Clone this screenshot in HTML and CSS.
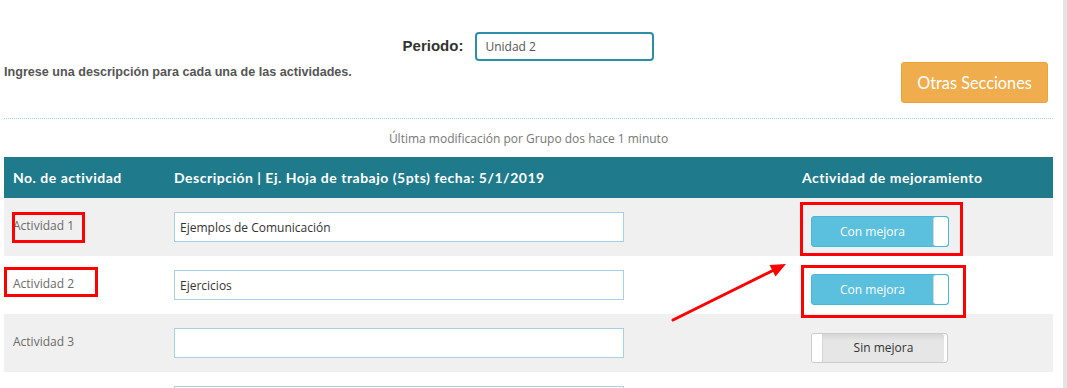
FILE: index.html
```html
<!DOCTYPE html>
<html lang="es">
<head>
    <meta charset="UTF-8">
    <meta name="viewport" content="width=device-width, initial-scale=1.0">
    <title>Actividades</title>
    <link rel="stylesheet" href="styles.css">
</head>
<body>
    <div class="page">
        <div class="periodo">
            <label class="periodo-label" for="periodo">Periodo:</label>
            <input class="periodo-input" id="periodo" type="text" value="Unidad 2">
        </div>

        <div class="intro">
            <p class="intro-text">Ingrese una descripción para cada una de las actividades.</p>
            <button class="btn-secciones">Otras Secciones</button>
        </div>

        <hr class="divider">

        <div class="last-mod">Última modificación por Grupo dos hace 1 minuto</div>

        <table class="activities">
            <colgroup>
                <col class="col-no">
                <col class="col-desc">
                <col class="col-mejora">
            </colgroup>
            <thead>
                <tr>
                    <th>No. de actividad</th>
                    <th>Descripción | Ej. Hoja de trabajo (5pts) fecha: 5/1/2019</th>
                    <th>Actividad de mejoramiento</th>
                </tr>
            </thead>
            <tbody>
                <tr>
                    <td><span class="act-name">Actividad 1</span></td>
                    <td><input class="desc-input" type="text" value="Ejemplos de Comunicación"></td>
                    <td>
                        <div class="toggle toggle-on">
                            <span class="toggle-label">Con mejora</span>
                            <span class="toggle-handle"></span>
                        </div>
                    </td>
                </tr>
                <tr>
                    <td><span class="act-name">Actividad 2</span></td>
                    <td><input class="desc-input" type="text" value="Ejercicios"></td>
                    <td>
                        <div class="toggle toggle-on">
                            <span class="toggle-label">Con mejora</span>
                            <span class="toggle-handle"></span>
                        </div>
                    </td>
                </tr>
                <tr>
                    <td><span class="act-name">Actividad 3</span></td>
                    <td><input class="desc-input" type="text" value=""></td>
                    <td>
                        <div class="toggle toggle-off">
                            <span class="toggle-handle"></span>
                            <span class="toggle-label">Sin mejora</span>
                        </div>
                    </td>
                </tr>
                <tr>
                    <td></td>
                    <td><input class="desc-input" type="text" value=""></td>
                    <td></td>
                </tr>
            </tbody>
        </table>

        <!-- annotation marks drawn over the screenshot -->
        <div class="mark mark-act1"></div>
        <div class="mark mark-act2"></div>
        <div class="mark mark-tog1"></div>
        <div class="mark mark-tog2"></div>
        <svg class="mark-arrow" width="140" height="75" viewBox="0 0 140 75">
            <line x1="13" y1="65" x2="114" y2="15" stroke="#ff0000" stroke-width="3" stroke-linecap="round"/>
            <polygon points="126,9 115.5,21.5 109.5,10" fill="#ff0000"/>
        </svg>
    </div>
</body>
</html>
```

FILE: styles.css
```css
html,
body {
    margin: 0;
    padding: 0;
    overflow: hidden;
    background-color: #ffffff;
}

.page {
    position: relative;
    padding: 0 10px 0 4px;
    border-right: 4px solid #e4e4e4;
    min-height: 100vh;
    box-sizing: border-box;
    font-family: "Open Sans", Arial, sans-serif;
    color: #333333;
}

.periodo {
    display: flex;
    justify-content: center;
    align-items: center;
    gap: 12px;
    padding-top: 32px;
}

.periodo-label {
    font-family: "Liberation Sans", Arial, sans-serif;
    font-size: 15px;
    font-weight: bold;
    color: #333333;
    margin-top: -3px;
}

.periodo-input {
    width: 179px;
    height: 29px;
    box-sizing: border-box;
    border: 2px solid #2a8ea6;
    border-radius: 4px;
    padding: 0 8px;
    font-family: "Open Sans", Arial, sans-serif;
    font-size: 12px;
    color: #555555;
    outline: none;
}

.intro {
    display: flex;
    justify-content: space-between;
    align-items: flex-start;
    margin-top: 1px;
}

.intro-text {
    margin: 3px 0 0;
    font-family: "Liberation Sans", Arial, sans-serif;
    font-size: 12.6px;
    line-height: 14px;
    font-weight: bold;
    color: #555555;
}

.btn-secciones {
    width: 147px;
    height: 41px;
    margin-right: 5px;
    background-color: #f0ad4e;
    border: 1px solid #eea236;
    border-radius: 3px;
    color: #ffffff;
    font-family: Lato, sans-serif;
    font-size: 16.3px;
    cursor: pointer;
}

.divider {
    border: 0;
    border-top: 1px dotted #a8cfe6;
    margin: 15px 0 0;
}

.last-mod {
    margin-top: 12px;
    text-align: center;
    font-size: 12px;
    line-height: 16px;
    color: #777777;
}

.activities {
    width: 1049px;
    margin-top: 10px;
    border-collapse: collapse;
    table-layout: fixed;
}

.col-no {
    width: 161px;
}

.col-desc {
    width: 628px;
}

.col-mejora {
    width: 260px;
}

.activities th {
    height: 41px;
    padding: 0 9px;
    background-color: #1f7a8b;
    color: #ffffff;
    font-family: Lato, sans-serif;
    font-size: 14px;
    font-weight: bold;
    letter-spacing: 0.5px;
    text-align: left;
    white-space: nowrap;
}

.activities td {
    height: 58px;
    padding: 0 9px;
    vertical-align: middle;
}

.activities tbody tr:nth-child(odd) {
    background-color: #f0f0f0;
}

.act-name {
    display: block;
    margin-bottom: 3px;
    font-size: 12px;
    line-height: 16px;
    color: #6b6b6b;
}

.desc-input {
    display: block;
    width: 450px;
    height: 30px;
    box-sizing: border-box;
    border: 1px solid #a9cfe3;
    padding: 0 5px;
    font-family: "Open Sans", Arial, sans-serif;
    font-size: 12px;
    color: #333333;
    background-color: #ffffff;
    outline: none;
}

.toggle {
    display: flex;
    width: 138px;
    height: 31px;
    margin: 9px 0 0 9px;
    box-sizing: border-box;
    border: 1px solid #cccccc;
    border-radius: 3px;
    overflow: hidden;
    font-size: 12px;
}

.toggle-label {
    flex: 1;
    display: flex;
    align-items: center;
    justify-content: center;
}

.toggle-handle {
    background-color: #ffffff;
}

.toggle-on {
    background-color: #5bc0de;
    border-color: #46b8da;
    color: #ffffff;
}

.toggle-on .toggle-handle {
    width: 14px;
    border-left: 1px solid #d6d6d6;
    border-radius: 3px;
}

.toggle-off {
    height: 30px;
    width: 137px;
    background-color: #e6e6e6;
    color: #333333;
    box-shadow: inset -3px 0 0 #ffffff, inset 0 3px 5px rgba(0, 0, 0, 0.08);
}

.toggle-off .toggle-handle {
    width: 10px;
    border-right: 1px solid #d6d6d6;
}

.toggle-off .toggle-label {
    padding-right: 3px;
}

/* red annotation marks */
.mark {
    position: absolute;
    border: 3px solid #ff0000;
    box-sizing: border-box;
}

.mark-act1 {
    left: 12px;
    top: 212px;
    width: 73px;
    height: 31px;
}

.mark-act2 {
    left: 4px;
    top: 267px;
    width: 94px;
    height: 30px;
}

.mark-tog1 {
    left: 800px;
    top: 202px;
    width: 163px;
    height: 54px;
}

.mark-tog2 {
    left: 801px;
    top: 265px;
    width: 165px;
    height: 53px;
}

.mark-arrow {
    position: absolute;
    left: 660px;
    top: 255px;
}
```
